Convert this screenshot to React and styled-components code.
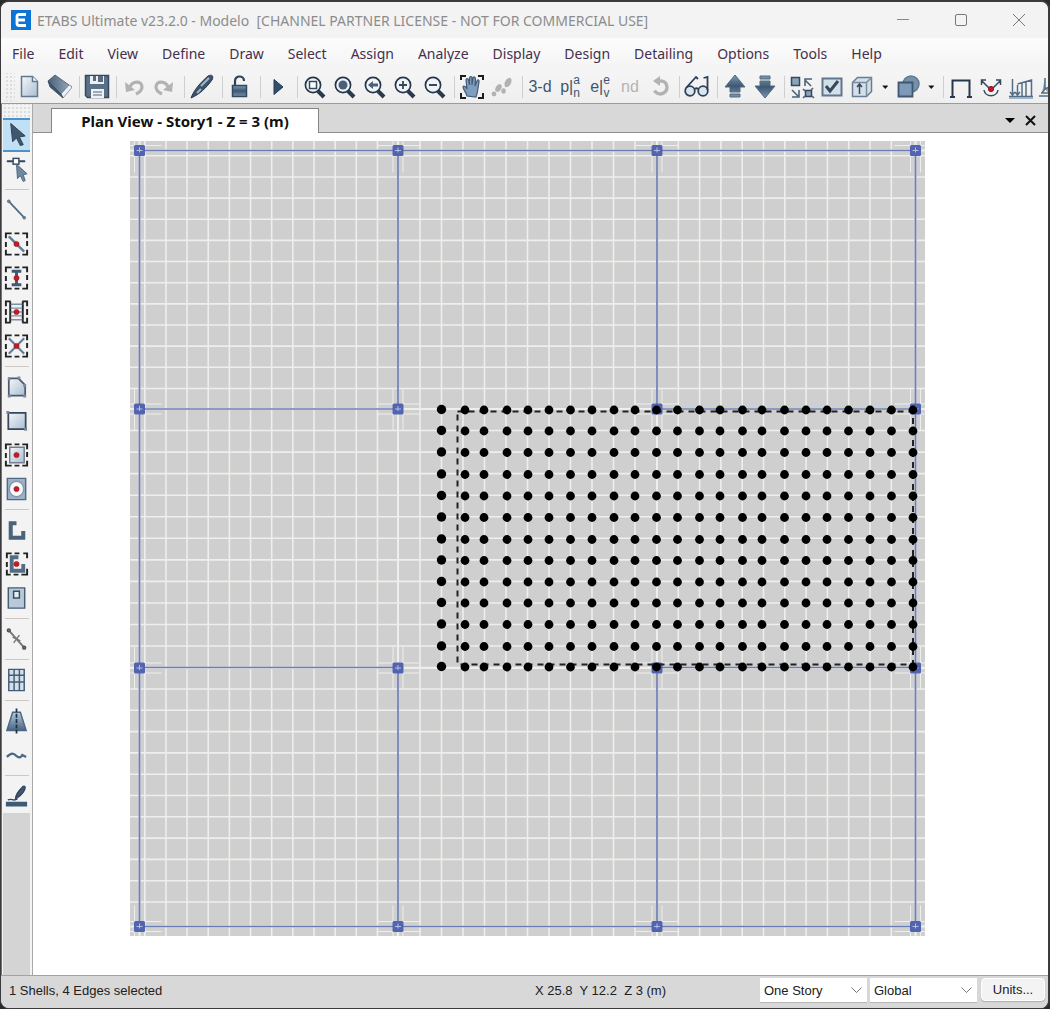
import React from "react";
import styled, { createGlobalStyle } from "styled-components";

const GlobalStyle = createGlobalStyle`
  * { box-sizing: border-box; }
  body {
    margin: 0;
    background: #2b2b2d;
    font-family: "Noto Sans", "Open Sans", sans-serif;
  }
  button, select { font: inherit; color: inherit; }
`;

const Window = styled.div`
  display: flex;
  flex-direction: column;
  min-height: 100vh;
  border: 1px solid #3c3a3d;
  border-top-width: 2px;
  border-right-width: 2px;
  border-radius: 9px;
  overflow: hidden;
  background: #d8d8d8;
`;

const TitleBar = styled.header`
  display: flex;
  align-items: center;
  height: 36px;
  padding-left: 10px;
  background: #f3f3f3;
`;

const Title = styled.h1`
  flex: 1;
  margin: 0 0 0 6px;
  font-size: 14px;
  font-weight: 400;
  color: #8c8c8c;
  white-space: pre;
`;

const CaptionButton = styled.button`
  width: 58px;
  height: 36px;
  padding: 0;
  border: 0;
  background: none;
  svg { display: block; margin: auto; }
`;

const MenuBar = styled.nav`
  display: flex;
  align-items: center;
  height: 32px;
  background: linear-gradient(#fcfcfc, #f4f4f4);
`;

const MenuItem = styled.button`
  padding: 0 12px;
  border: 0;
  background: none;
  font-size: 14px;
  line-height: 32px;
  color: #45304c;
  &:first-child { padding-left: 11px; }
`;

const Toolbar = styled.div`
  display: flex;
  align-items: center;
  height: 34px;
  overflow: hidden;
  background: linear-gradient(#f5f5f5, #efefef);
  border-bottom: 1px solid #9b9b9b;
`;

const Grip = styled.span`
  flex: none;
  width: ${(p) => (p.$across ? "28px" : "10px")};
  height: ${(p) => (p.$across ? "14px" : "28px")};
  margin-left: ${(p) => (p.$across ? "0" : "4px")};
  background: radial-gradient(circle at 1px 1px, #dcdcdc 1px, transparent 1px) 1px 3px / 4px 4px;
`;

const ToolButton = styled.button`
  flex: none;
  display: flex;
  align-items: center;
  justify-content: center;
  width: ${(p) => (p.$narrow ? "16px" : "30px")};
  height: 30px;
  padding: 0;
  border: 0;
  background: none;
  font-family: "Liberation Sans", Arial, sans-serif;
  font-size: 16px;
  line-height: 20px;
  color: ${(p) => (p.$dim ? "#b4b4b4" : "#3d566e")};
`;

const Stack = styled.span`
  display: flex;
  flex-direction: column;
  font-size: 12px;
  line-height: 13px;
`;

const Divider = styled.span`
  flex: none;
  width: ${(p) => (p.$wide ? "8px" : "7px")};
  height: 22px;
  border-right: 2px solid transparent;
  background: linear-gradient(#cfcfcf, #cfcfcf) right / 1px 100% no-repeat;
  background-clip: padding-box;
`;

const Workspace = styled.div`
  flex: 1;
  display: flex;
  background: #f4f4f4;
`;

const Sidebar = styled.aside`
  flex: none;
  display: flex;
  flex-direction: column;
  width: 31px;
  padding: 0 2px 0 1px;
  border-left: 1px solid #77716c;
  background: #f3f3f3;
`;

const SideFill = styled.span`
  flex: 1;
  background: #d4d4d4;
`;

const SideButton = styled.button`
  flex: none;
  display: flex;
  align-items: center;
  justify-content: center;
  height: 34px;
  padding: 0;
  border: solid ${(p) => (p.$active ? "#4b93c9" : "transparent")};
  border-width: 2px 0;
  background: ${(p) => (p.$active ? "#bfe0f5" : "none")} padding-box;
`;

const SideDivider = styled.hr`
  width: 24px;
  height: 1px;
  margin: 3px auto;
  border: 0;
  background: #cdc6c2;
`;

const Document = styled.main`
  flex: 1;
  min-width: 0;
  display: flex;
  flex-direction: column;
  border-left: 1px solid #a8a8a8;
  background: #fff;
`;

const TabStrip = styled.div`
  display: flex;
  align-items: flex-end;
  height: 29px;
  padding: 0 7px 0 18px;
  background: #d8d8d8;
  box-shadow: inset 0 -1px #8e8e8e;
`;

const Tab = styled.button`
  width: 268px;
  height: 25px;
  padding: 0;
  border: 1px solid #858585;
  border-bottom: 0;
  background: #fff;
  font-size: 15px;
  font-weight: 700;
  line-height: 22px;
  color: #111;
`;

const Spacer = styled.span`
  flex: 1;
`;

const TabControl = styled.button`
  display: flex;
  align-items: center;
  justify-content: center;
  width: 21px;
  height: 26px;
  padding: 0;
  border: 0;
  background: none;
`;

const Canvas = styled.div`
  flex: 1;
  padding: 8px 122px 36px 96px;
  svg { display: block; width: 100%; max-width: 795px; height: auto; margin: 0 auto; }
`;

const StatusBar = styled.footer`
  display: flex;
  align-items: flex-start;
  gap: 3px;
  height: 33px;
  padding: 2px 3px 0 8px;
  border-top: 1px solid #a3a3a3;
  background: #d8d8d8;
  font-family: "Liberation Sans", Arial, sans-serif;
  font-size: 13px;
  line-height: 25px;
  color: #202020;
`;

const Message = styled.span`
  flex: 1;
`;

const Coordinates = styled.span`
  width: 222px;
  white-space: pre;
`;

const Picker = styled.label`
  position: relative;
  width: 107px;
  svg { position: absolute; right: 5px; top: 9px; pointer-events: none; }
`;

const PickerSelect = styled.select`
  appearance: none;
  display: block;
  width: 100%;
  height: 25px;
  padding: 0 20px 0 4px;
  border: 0;
  border-bottom: 1px solid #b5b5b5;
  border-radius: 0;
  background: #fff;
`;

const UnitsButton = styled.button`
  width: 64px;
  height: 23px;
  margin-left: 1px;
  padding: 0;
  border: 1px solid #fff;
  border-radius: 4px;
  background: #f3f3f3;
  box-shadow: 0 1px 1px #b0b0b0;
  line-height: 21px;
`;

const NAVY = "#34485f";
const BLUE = "#8ba3bd";
const GRAY = "#b2b2b2";

function Icon({ children, size = 28 }) {
  return (
    <svg width={size} height={size} viewBox="0 0 28 28" fill="none" stroke={NAVY} strokeWidth="1.5" aria-hidden="true">
      {children}
    </svg>
  );
}

const Magnifier = ({ children }) => (
  <>
    <path d="M17 18l6 6" stroke="#283a4d" strokeWidth="4" />
    <circle cx="12" cy="12" r="7.6" stroke="#26364a" fill="#f1f4f7" strokeWidth="1.7" />
    {children}
  </>
);
const Brackets = () => <path d="M3 8V3h6M12 3h5M20 3h5v5M25 11v5M25 20v5h-5M17 25h-5M9 25H3v-5M3 17v-5" stroke="#222" strokeWidth="2" />;
const RedDot = () => <circle cx="14" cy="14" r="2.7" fill="#cf1720" stroke="#8c1c28" strokeWidth=".6" />;

const art = {
  create: <><path d="M5.5 3.5h11l5 5v15h-16z" fill="url(#sheen)" stroke="#62788f" /><path d="M16.500 3.500v5h5" fill="#fff" stroke="#62788f" /></>,
  open: <g strokeWidth=".8"><path d="M2 8l7-6 14 10-8 9z" fill="url(#cover)" stroke="#3d536a" /><path d="M15 21l8-9 2.500 1v2L17 25z" fill="#edf2f6" stroke="#71859a" /><path d="M2 8l13 13 2 4L4 14z" fill="#3f566e" stroke="#33475c" /></g>,
  save: <><path d="M2.500 2.500h23v22h-21l-2-2z" fill="#5a7087" /><path d="M7 3h14v8H7z" fill="#e9eff4" stroke="none" /><path d="M10 3h3v5h-3zM15 3h5v6h-5z" fill="#566a80" stroke="none" /><path d="M8 16h13v9H8z" fill="#eef2f5" stroke="none" /><path d="M10 19h9M10 22h9" stroke="#8394a5" /></>,
  undo: <><path d="M10 14c2-6 12-7 12 0 0 3-2 5-6 7" stroke={GRAY} strokeWidth="3.200" /><path d="M5 9l1 10 9-2z" fill={GRAY} stroke="none" /></>,
  redo: <><path d="M18 14c-2-6-12-7-12 0 0 3 2 5 6 7" stroke={GRAY} strokeWidth="3.200" /><path d="M23 9l-1 10-9-2z" fill={GRAY} stroke="none" /></>,
  pen: <><path d="M3 25c3-8 9-15 17-22 4-2 6 0 4 4C18 15 12 21 3 25z" fill="#3c536b" stroke="#273b50" strokeWidth="1" /><path d="M13 13l8-8M9 20l4-4" stroke="#a3b5c8" strokeWidth="2" /></>,
  lock: <><path d="M9 13V8c0-6 9-6 9 0" stroke="#2e4156" strokeWidth="2.200" /><path d="M6.500 12.500h14v11h-14z" fill="url(#deep)" /></>,
  run: <path d="M10 6.500v15l9-7.500z" fill="#31506d" stroke="#253c54" strokeWidth="1" />,
  zoomBox: <Magnifier><rect x="8.500" y="8.500" width="7" height="7" fill="#fff" /></Magnifier>,
  zoomAll: <Magnifier><circle cx="12" cy="12" r="4.500" fill="#4b6179" stroke="none" /></Magnifier>,
  zoomBack: <Magnifier><path d="M7 12l5-4v2.500h5v3h-5V16z" fill="#4b6179" stroke="none" /></Magnifier>,
  zoomIn: <Magnifier><path d="M12 8v8M8 12h8" strokeWidth="1.800" /></Magnifier>,
  zoomOut: <Magnifier><path d="M8 12h8" strokeWidth="1.800" /></Magnifier>,
  pan: <><path d="M3 7V3h5M20 3h5v4M25 20v5h-5M8 25H3v-5" stroke="#1d1d1d" strokeWidth="2" /><path d="M9 23c-1-4-4-7-4-9 1-2 3 0 4 2L8 7c0-2 2-2 2.500 0l1 5V5c0-2 2.500-2 2.500 0v7l1-7c.5-2 2.500-1 2.500 1L17 13l2-5c.6-2 2.500-1 2 1-1 5-1 10-3 15z" fill="#7f9dbd" stroke="#425b76" strokeWidth="1.200" /></>,
  walk: <g fill={GRAY} stroke="none"><ellipse cx="10.500" cy="15" rx="2.700" ry="4.200" transform="rotate(32 10.500 15)" /><ellipse cx="20" cy="9.500" rx="3" ry="5" transform="rotate(28 20 9.500)" /><circle cx="6" cy="21" r="2.400" /><ellipse cx="15.500" cy="18" rx="2.200" ry="2.700" /></g>,
  rotate: <><path d="M12 8h3c4 0 6 3 6 6.500S18 21 14.500 21c-2.500 0-4.500-1-6-3.500" stroke={GRAY} strokeWidth="3.400" /><path d="M7 8l7-5v10z" fill={GRAY} stroke="none" /></>,
  glasses: <g stroke="#2d4055" strokeWidth="1.800"><circle cx="7" cy="18" r="4.800" fill="#d9e6ef" /><circle cx="20" cy="18" r="4.800" fill="#d9e6ef" /><path d="M12 16c1-1 2-1 3 0M3 15L13 4l2 2M24.500 17V4l-4 1" /></g>,
  up: <path d="M14 2L4 14h5v5h10v-5h5zM9 21h10v3H9z" fill="url(#deep)" stroke="#526a83" strokeWidth="1" />,
  down: <path d="M14 25L4 13h5V8h10v5h5zM9 3h10v3H9z" fill="url(#deep)" stroke="#526a83" strokeWidth="1" />,
  swap: <><path d="M3.500 4.500h8v8h-8zM17.500 17.500h6v6h-6z" fill={BLUE} /><path d="M23 13l-6-6M17 13V6h7M4 17l6 6M4 24h7v-7M15 16l2 2M25 15l-2 2M15 25l2-2M26 25l-2-2" stroke="#4d6278" strokeWidth="1.600" /></>,
  check: <><path d="M4.500 5.500h19v17h-19z" fill="#d3dfe9" stroke="#60778e" strokeWidth="2" /><path d="M8 13l4 5 8-10" strokeWidth="3" /></>,
  cube: <><path d="M4.500 9.500l5-5h14v14l-5 5h-14z" fill="#d3dfe9" stroke="#687d92" /><path d="M4.500 9.500h14v14M18.500 9.500l5-5" stroke="#7a8d9f" /><path d="M11.500 21v-9M9 14l2.500-3 2.500 3" /></>,
  caret: <path d="M10 12h9l-4.500 5z" fill="#111" stroke="#111" strokeWidth=".8" />,
  shapes: <><circle cx="17" cy="11" r="8" fill="#7590ab" stroke="#60798f" /><path d="M4.500 9.500h14v14h-14z" fill="#7f9ab8" stroke="#3f5771" strokeWidth="1.800" /></>,
  frame: <path d="M3 24h5M5.500 24V7.500h17V24M20 24h5" stroke="#26384d" strokeWidth="2" />,
  joint: <><path d="M5 8l7 7M4.500 12V7H9M23 8l-7 7M23.500 12V7H19M7 17c1 7.500 13 7.500 14 0" strokeWidth="1.500" /><circle cx="14" cy="16" r="2.600" fill="#c51925" stroke="#8e1624" strokeWidth="1" /></>,
  load: <><path d="M2 23.500h24M5.500 23V6M10.500 23V12M10.500 11l14-4v16M15 23V10M19 23V9M3 19l2.500 3L8 19M8 19l2.500 3 2.500-3" stroke="#536d87" /><path d="M2 25h24" stroke="#8ba3bd" /></>,
  loadCut: <path d="M2 23h24M4 20h20M5 20l3-4V5M8 16l6-3v10" fill={BLUE} stroke="#536d87" />,

  pointer: <path d="M8 2l2 19 4-4 4 8 3-1-4-8 6-1z" fill="#41576e" stroke="#2f4155" strokeWidth="1" />,
  reshape: <><path d="M4 6h7M16 6h7" strokeWidth="2" /><rect x="10.500" y="3" width="6" height="6" fill="#fff" /><path d="M14 9l1 15 3-3 3 6 2-1-2-6 4-1z" fill="#6f879f" stroke="#54697e" strokeWidth="1" /></>,
  line: <><path d="M6 5l16 17" stroke="#506a83" strokeWidth="1.800" /><circle cx="6" cy="5" r="1.400" fill="#71859a" stroke="#5c7085" strokeWidth="1" /><circle cx="22" cy="22" r="1.400" fill="#71859a" stroke="#5c7085" strokeWidth="1" /></>,
  beam: <><Brackets /><path d="M6 6l16 16" stroke="#617d98" strokeWidth="2.600" /><RedDot /></>,
  column: <><Brackets /><path d="M9 7h10M14 7v14M9 21h10" stroke="#405a73" strokeWidth="3" /><RedDot /></>,
  joists: <><path d="M8 3H3v5M20 3h5v5M3 20v5h5M25 20v5h-5M3 11v6M25 11v6M7.500 3v22M20.500 3v22" stroke="#222" strokeWidth="2" /><path d="M8 6h12M8 10h12M8 14h12M8 18h12M8 22h12" stroke="#7890a8" /><RedDot /></>,
  brace: <><Brackets /><path d="M6 6l16 16M22 6L6 22" stroke="#617d98" strokeWidth="2.200" /><RedDot /></>,
  polygon: <><path d="M6 5h10l7 7v11H6z" fill="url(#sheen)" stroke="#4b5b6e" strokeWidth="1.800" /><path d="M5 4h3v3H5zM15 3h3v3h-3zM5 22h3v3H5zM21 22h3v3h-3zM21 11h3v3h-3z" fill="#7a8999" stroke="none" /></>,
  rect: <><path d="M5.500 5.500h18v17h-18z" fill="url(#sheen)" stroke="#37465a" strokeWidth="1.800" /><path d="M3.500 3.500h3v3h-3zM22 21h3v3h-3z" fill="#7a8999" stroke="none" /></>,
  quick: <><Brackets /><path d="M7 6h15v16H7z" fill="url(#sheen)" stroke="#6f7e8d" /><RedDot /></>,
  round: <><path d="M4.500 3h19v22h-19z" fill="#9eb2c7" stroke="#506a83" /><ellipse cx="14" cy="14" rx="7.500" ry="8" fill="#f7f9fb" stroke="#8599ae" /><RedDot /></>,
  wall: <path d="M14 7H8v15h13v-7" stroke="#4a627a" strokeWidth="4.200" />,
  wallBox: <><path d="M4 8V3h5M12 3h5M21 3h4v5M25 19v6h-6M16 25h-5M8 25H4v-5M4 17v-5" stroke="#222" strokeWidth="2" /><path d="M16 7H9v14h12v-7" stroke="#536b83" strokeWidth="4" /><RedDot /></>,
  opening: <><path d="M5.500 3.500h17v21h-17z" fill="#b7c9da" stroke="#465c73" /><rect x="11" y="7" width="6" height="7" fill="#e4edf4" /></>,
  link: <><path d="M6 5l16 18" stroke="#777" strokeWidth="2" /><path d="M17 10l-6 8M10 12l8 4" stroke="#777" /><circle cx="6" cy="5" r="1.500" fill="#777" stroke="#555" /><circle cx="22" cy="23" r="1.500" fill="#777" stroke="#555" /></>,
  grid: <path d="M6 3h16v22H6zM11.500 3v22M17 3v22M6 9h16M6 16h16" fill="#d3dfea" stroke="#425c75" />,
  tower: <><path d="M10 5h8l6 19H4z" fill="url(#slope)" stroke="#496783" /><path d="M14 1v26" stroke="#1e3042" strokeWidth="1.800" strokeDasharray="4 1.500" /></>,
  wave: <path d="M4 16c5-5 7-4 10-1s5 1 6-1l4 2" stroke="#496783" strokeWidth="2.400" />,
  draw: <><path d="M3 20h22v5H3z" fill="#3d5a76" stroke="none" /><path d="M5 18c5-2 5 2 10-1" /><path d="M13 17c0-6 5-10 8-13 3-1 2 3 0 6s-4 5-8 7z" fill="#43586e" /></>,
};

const topTools = [
  ["New", "create"], ["Open", "open"], "|", ["Save", "save"], "|", ["Undo", "undo"], ["Redo", "redo"], "||",
  ["Edit properties", "pen"], "||", ["Unlock model", "lock"], "||", ["Run analysis", "run"], "|",
  ["Rubber band zoom", "zoomBox"], ["Full view", "zoomAll"], ["Previous zoom", "zoomBack"], ["Zoom in", "zoomIn"], ["Zoom out", "zoomOut"], "|",
  ["Pan", "pan"], ["Walk", "walk"], "||",
  ["3-d view", "text:3-d"], ["Plan view", "text:p|,a,n"], ["Elevation view", "text:e|,e,v"], ["nd view", "dim:nd"], ["Rotate", "rotate"], "|",
  ["Perspective", "glasses"], "||", ["Story up", "up"], ["Story down", "down"], "|",
  ["Shrink objects", "swap"], ["Display options", "check"], ["Extrude view", "cube"], ["Extrude choices", "caret"],
  ["Object view", "shapes"], ["Object choices", "caret"], "|",
  ["Undeformed shape", "frame"], ["Joint loads", "joint"], ["Frame loads", "load"], ["Shell loads", "loadCut"],
];

const sideTools = [
  ["Select", "pointer"], ["Reshape", "reshape"], "|", ["Draw line", "line"], ["Quick beam", "beam"], ["Quick column", "column"],
  ["Secondary beams", "joists"], ["Braces", "brace"], "|", ["Polygon area", "polygon"], ["Rectangle area", "rect"],
  ["Quick area", "quick"], ["Area around point", "round"], "|", ["Draw wall", "wall"], ["Quick wall", "wallBox"],
  ["Wall opening", "opening"], "|", ["Link", "link"], "|", ["Grid", "grid"], "|", ["Tower", "tower"], ["Tendon", "wave"], "|", ["Section cut", "draw"],
];

function ToolFace({ name }) {
  if (name.includes(":")) {
    const [first, ...stacked] = name.split(":")[1].split(",");
    return (
      <>
        {first}
        {stacked.length > 0 && <Stack>{stacked.map((s) => <span key={s}>{s}</span>)}</Stack>}
      </>
    );
  }
  return name === "caret" ? <Icon size={24}>{art.caret}</Icon> : <Icon>{art[name]}</Icon>;
}

/* Plan geometry, in canvas pixels. */
const range = (from, step, count) => Array.from({ length: count }, (_, i) => from + step * i);
const axes = [9.5, 268, 527, 785.5];
const gridLines = [...range(14.8, 21.15, 12), ...range(290, 21.5, 11), ...range(527, 21.3, 12)];
const gridRows = [...range(14.8, 21.15, 12), ...range(268, 21.55, 13), ...range(548, 21.3, 11)];
const dotColumns = [335, 354, 377, 398, 419, 440.500, 462, 484, 505, 526.500, 547.500, 569.500, 590, 612.500, 632, 654.500, 676, 697, 718.500, 740, 761.500, 783];
const dotRows = [269, 290, 311.500, 333.500, 355, 376.500, 398.500, 419.500, 441, 462, 483.500, 505.500, 526];

function Plan() {
  return (
    <svg viewBox="0 0 795 795" role="img" aria-label="Plan of Story1">
      <rect width="795" height="795" fill="#cfcfcf" />
      <g stroke="#eeeeec" strokeWidth="1.600">
        {gridLines.map((x) => <path key={`v${x}`} d={`M${x} 0V795`} />)}
        {gridRows.map((y) => <path key={`h${y}`} d={`M0 ${y}H795`} />)}
        {axes.map((a) => <path key={a} d={`M${a} 0V795M0 ${a}H795`} strokeWidth="2" />)}
      </g>
      {axes.flatMap((x) => axes.map((y) => (
        <path key={`${x}-${y}`} d={`M${x - 5} ${y - 21}v43M${x + 5} ${y - 21}v43M${x - 21} ${y - 5}h43M${x - 21} ${y + 5}h43`} stroke="#eeeeec" />
      )))}
      <path
        d="M9.500 9.500H785.500V785.500H9.500ZM268 9.500V268H9.500M9.500 526.500H268V785.500M527 9.500V268H785.500M785.500 526.500H527V785.500"
        fill="none" stroke="#6b7db5" strokeWidth="1.700"
      />
      {axes.flatMap((x) => axes.map((y) => (
        <g key={`${x}-${y}`}>
          <rect x={x - 5.500} y={y - 5.500} width="11" height="11" rx="1.500" fill="#5263af" />
          <path d={`M${x - 3} ${y}h6M${x} ${y - 3}v5`} stroke="#b4bfe3" />
        </g>
      )))}
      <rect x="327.500" y="270.500" width="455.500" height="253" fill="none" stroke="#222" strokeWidth="2" strokeDasharray="6 5" />
      {dotRows.map((y) => (
        <g key={y}>
          <circle cx="311.500" cy={y - 0.500} r="4.700" />
          {dotColumns.map((x) => <circle key={x} cx={x} cy={y} r="4.400" />)}
        </g>
      ))}
    </svg>
  );
}

function StatusPicker({ label, value }) {
  return (
    <Picker>
      <PickerSelect aria-label={label} defaultValue={value}>
        <option>{value}</option>
      </PickerSelect>
      <svg width="11" height="7" fill="none" stroke="#777" aria-hidden="true"><path d="M.5.5l5 5 5-5" /></svg>
    </Picker>
  );
}

const menus = ["File", "Edit", "View", "Define", "Draw", "Select", "Assign", "Analyze", "Display", "Design", "Detailing", "Options", "Tools", "Help"];

export default function App() {
  return (
    <>
      <GlobalStyle />
      <Window>
        <TitleBar>
          <svg width="20" height="20" aria-hidden="true">
            <defs>
              <linearGradient id="sheen" x1="0" y1="0" x2="1" y2="1"><stop stopColor="#f4f7fa" /><stop offset="1" stopColor="#a9bdd1" /></linearGradient>
              <linearGradient id="deep" x1="0" y1="0" x2="0" y2="1"><stop stopColor="#7f98b1" /><stop offset=".5" stopColor="#3d5873" /><stop offset="1" stopColor="#7b95af" /></linearGradient>
              <linearGradient id="cover"><stop stopColor="#4b6179" /><stop offset="1" stopColor="#8fa3b8" /></linearGradient>
              <linearGradient id="slope" x1="0" y1="0" x2="0" y2="1"><stop stopColor="#b9cadb" /><stop offset="1" stopColor="#456380" /></linearGradient>
            </defs>
            <rect width="20" height="20" fill="#0c74d4" />
            <path d="M15 4.500H8Q6 4.500 6 6.500v7q0 2 2 2h7M6 10h8" fill="none" stroke="#fff" strokeWidth="2.800" />
          </svg>
          <Title>{"ETABS Ultimate v23.2.0 - Modelo  [CHANNEL PARTNER LICENSE - NOT FOR COMMERCIAL USE]"}</Title>
          <CaptionButton aria-label="Minimize"><svg width="12" height="12" stroke="#888"><path d="M0 5.500h12" /></svg></CaptionButton>
          <CaptionButton aria-label="Maximize"><svg width="12" height="12" stroke="#777" fill="none"><rect x=".5" y=".5" width="11" height="11" rx="1.500" /></svg></CaptionButton>
          <CaptionButton aria-label="Close"><svg width="12" height="12" stroke="#777"><path d="M0 0l12 12M12 0L0 12" /></svg></CaptionButton>
        </TitleBar>
        <MenuBar>
          {menus.map((m) => <MenuItem key={m}>{m}</MenuItem>)}
        </MenuBar>
        <Toolbar>
          <Grip />
          {topTools.map((t, i) =>
            typeof t === "string" ? (
              <Divider key={i} $wide={t === "||"} />
            ) : (
              <ToolButton key={i} aria-label={t[0]} $narrow={t[1] === "caret"} $dim={t[1].startsWith("dim")}>
                <ToolFace name={t[1]} />
              </ToolButton>
            )
          )}
        </Toolbar>
        <Workspace>
          <Sidebar>
            <Grip $across />
            {sideTools.map((t, i) =>
              t === "|" ? (
                <SideDivider key={i} />
              ) : (
                <SideButton key={i} aria-label={t[0]} $active={i === 0}><Icon>{art[t[1]]}</Icon></SideButton>
              )
            )}
            <SideFill />
          </Sidebar>
          <Document>
            <TabStrip>
              <Tab>Plan View - Story1 - Z = 3 (m)</Tab>
              <Spacer />
              <TabControl aria-label="Window list"><svg width="10" height="5"><path d="M0 0h10L5 5z" /></svg></TabControl>
              <TabControl aria-label="Close tab"><svg width="11" height="11" stroke="#111" strokeWidth="2"><path d="M1 1l9 9M10 1l-9 9" /></svg></TabControl>
            </TabStrip>
            <Canvas><Plan /></Canvas>
          </Document>
        </Workspace>
        <StatusBar>
          <Message>1 Shells, 4 Edges selected</Message>
          <Coordinates>{"X 25.8  Y 12.2  Z 3 (m)"}</Coordinates>
          <StatusPicker label="Story scope" value="One Story" />
          <StatusPicker label="Coordinate system" value="Global" />
          <UnitsButton>Units...</UnitsButton>
        </StatusBar>
      </Window>
    </>
  );
}
